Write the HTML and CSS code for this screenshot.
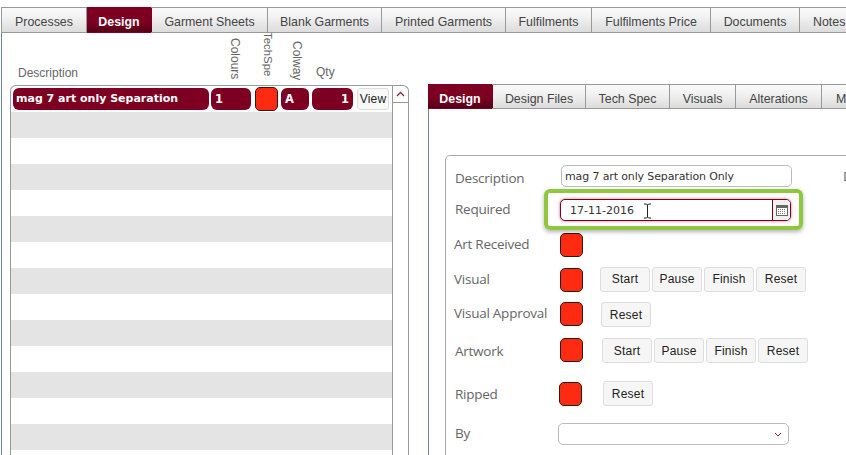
FILE: index.html
```html
<!DOCTYPE html>
<html lang="en">
<head>
<meta charset="utf-8">
<title>Design</title>
<link rel="stylesheet" href="styles.css">
</head>
<body>
<nav class="tabs main-tabs">
  <div class="tab w-processes">Processes</div>
  <div class="tab active w-design">Design</div>
  <div class="tab w-sheets">Garment Sheets</div>
  <div class="tab w-blank">Blank Garments</div>
  <div class="tab w-printed">Printed Garments</div>
  <div class="tab w-fulfil">Fulfilments</div>
  <div class="tab w-price">Fulfilments Price</div>
  <div class="tab w-docs">Documents</div>
  <div class="tab w-notes">Notes</div>
</nav>
<main class="content">
  <section class="left">
    <div class="list-head">
      <span class="h-desc">Description</span>
      <span class="v h-colours">Colours</span>
      <span class="v h-tech">TechSpe</span>
      <span class="v h-colway">Colway</span>
      <span class="h-qty">Qty</span>
    </div>
    <div class="list">
      <div class="rows">
        <div class="row first">
          <div class="pill p-desc">mag 7 art only Separation</div>
          <div class="pill p-col">1</div>
          <div class="swatch s-row"></div>
          <div class="pill p-a">A</div>
          <div class="pill p-qty">1</div>
          <div class="btn b-view">View</div>
        </div>
        <div class="row grey"></div><div class="row"></div>
        <div class="row grey"></div><div class="row"></div>
        <div class="row grey"></div><div class="row"></div>
        <div class="row grey"></div><div class="row"></div>
        <div class="row grey"></div><div class="row"></div>
        <div class="row grey"></div><div class="row"></div>
        <div class="row grey"></div><div class="row"></div>
      </div>
      <div class="scroll">
        <div class="scroll-up">
          <svg width="9" height="6" viewBox="0 0 9 6"><path d="M1 5 L4.5 1.5 L8 5" fill="none" stroke="#8a2a40" stroke-width="1.3"/></svg>
        </div>
      </div>
    </div>
  </section>
  <section class="right">
    <nav class="tabs sub-tabs">
      <div class="tab active w-s-design">Design</div>
      <div class="tab w-s-files">Design Files</div>
      <div class="tab w-s-tech">Tech Spec</div>
      <div class="tab w-s-visuals">Visuals</div>
      <div class="tab w-s-alt">Alterations</div>
      <div class="tab w-s-more">More</div>
    </nav>
    <div class="pane">
      <div class="box">
        <div class="frow r-desc">
          <label class="lbl l-desc">Description</label>
          <div class="input">mag 7 art only Separation Only</div>
          <label class="lbl l-extra">Date</label>
        </div>
        <div class="frow r-req">
          <label class="lbl l-req">Required</label>
          <div class="date-wrap">
            <div class="date">
              <span class="date-val">17-11-2016</span>
              <span class="date-btn">
                <svg width="12" height="11" viewBox="0 0 12 11"><rect x="0.5" y="0.5" width="11" height="10" fill="#fff" stroke="#666"/><rect x="1" y="1" width="10" height="2" fill="#666"/><path d="M2 4.500h8M2 6.500h8M2 8.500h8" stroke="#777" stroke-dasharray="1 1"/></svg>
              </span>
            </div>
            <div class="highlight"></div>
            <svg class="ibeam" width="9" height="16" viewBox="0 0 9 16"><path d="M1 1h2.500l1 1 1-1H8M4.500 2v12M1 15h2.500l1-1 1 1H8" fill="none" stroke="#222" stroke-width="1"/></svg>
          </div>
        </div>
        <div class="frow r-art">
          <label class="lbl l-art l-received">Art Received</label>
          <div class="swatch"></div>
        </div>
        <div class="frow r-visual">
          <label class="lbl l-art">Visual</label>
          <div class="swatch s-low"></div>
          <div class="btns g-17">
            <div class="btn">Start</div><div class="btn">Pause</div><div class="btn">Finish</div><div class="btn">Reset</div>
          </div>
        </div>
        <div class="frow r-approval">
          <label class="lbl l-art l-approval">Visual Approval</label>
          <div class="swatch s-top"></div>
          <div class="btns g-18"><div class="btn">Reset</div></div>
        </div>
        <div class="frow r-artwork">
          <label class="lbl l-work">Artwork</label>
          <div class="swatch s-top"></div>
          <div class="btns g-19">
            <div class="btn">Start</div><div class="btn">Pause</div><div class="btn">Finish</div><div class="btn">Reset</div>
          </div>
        </div>
        <div class="frow r-ripped">
          <label class="lbl l-ripped">Ripped</label>
          <div class="swatch s-bottom"></div>
          <div class="btns g-21"><div class="btn">Reset</div></div>
        </div>
        <div class="frow r-by">
          <label class="lbl l-by">By</label>
          <div class="select">
            <svg width="8" height="5" viewBox="0 0 8 5"><path d="M1 1 L4 4 L7 1" fill="none" stroke="#8a2a40" stroke-width="1"/></svg>
          </div>
        </div>
      </div>
    </div>
  </section>
</main>
</body>
</html>
```

FILE: styles.css
```css
* { box-sizing: border-box; }
html, body { margin: 0; height: 455px; overflow: hidden; background: #fff; }
body { width: 846px; padding-top: 7px; font-family: "Liberation Sans", Arial, sans-serif; color: #555; }

.tabs { display: flex; flex-wrap: nowrap; }
.main-tabs { height: 26px; margin-left: 1px; width: 845px; overflow: hidden; }
.sub-tabs { height: 25px; width: 418px; overflow: hidden; }
.tab {
  flex: none; display: flex; align-items: center; justify-content: center;
  font-size: 12.4px; color: #444; white-space: nowrap; padding-top: 4px;
  border-top: 1px solid #999; border-bottom: 1px solid #999; border-right: 1px solid #999;
  background: linear-gradient(#fafafa, #f1f1f1 40%, #dcdcdc);
}
.tab.active {
  color: #fff; font-weight: bold; border-right-color: transparent;
  background: linear-gradient(#7d0022, #7d0022 55%, #560017);
  border-top-color: #7d0022; border-bottom-color: #7d0022;
}
.w-processes { width: 86px; border-left: 1px solid #999; }
.w-design { width: 65px; }
.w-sheets { width: 116px; }
.w-blank { width: 114px; }
.w-printed { width: 124px; }
.w-fulfil { width: 86px; }
.w-price { width: 119px; }
.w-docs { width: 89px; }
.w-notes { width: 60px; justify-content: flex-start; padding-left: 13px; }
.w-s-design { width: 65px; }
.w-s-files { width: 93px; }
.w-s-tech { width: 84px; }
.w-s-visuals { width: 66px; }
.w-s-alt { width: 86px; }
.w-s-more { width: 40px; justify-content: flex-start; padding-left: 14px; }

.content { display: flex; height: 423px; margin-left: 1px; }

.left { flex: none; width: 427px; border-left: 1px solid #6b8793; }
.list-head {
  height: 52px; padding-left: 16px; display: grid;
  grid-template-columns: 211px 33px 29px 25px auto; grid-template-rows: 52px;
  align-items: end; justify-items: start;
  font-size: 12px; color: #666; overflow: hidden;
}
.v { writing-mode: vertical-rl; line-height: 12px; }
.h-desc { padding-bottom: 5px; }
.h-colours { padding-bottom: 6px; }
.h-tech { padding-bottom: 9px; font-size: 11.4px; }
.h-colway { padding-bottom: 5px; }
.h-qty { padding-bottom: 6px; }

.list {
  margin-left: 8px; width: 399px; height: 371px; display: flex;
  border: 1px solid #999; border-bottom: 0; border-radius: 6px 6px 0 0; overflow: hidden;
}
.rows { flex: none; width: 382px; border-right: 1px solid #999; }
.row { height: 26px; }
.row.grey { background: #e4e4e4; }
.row.first { display: flex; align-items: flex-start; padding: 2px 0 0 2px; }
.pill {
  height: 22px; border-radius: 6px; background: #7d0022; color: #fff;
  font: bold 11.5px/22px "DejaVu Sans", Verdana, sans-serif; padding: 0 4px;
  white-space: nowrap; overflow: hidden;
}
.p-desc { width: 196px; font-size: 11px; padding-left: 3px; }
.p-col { width: 40px; margin-left: 2px; }
.p-a { width: 28px; margin-left: 3px; }
.p-qty { width: 41px; margin-left: 3px; text-align: right; }
.scroll { flex: 1; }
.scroll-up { height: 17px; border-bottom: 1px solid #999; display: flex; align-items: center; justify-content: center; }

.swatch {
  flex: none; width: 23px; height: 24px; background: #ff2a12;
  border: 1px solid #2d1a14; border-radius: 5px;
}
.s-row { margin: -1px 0 0 4px; }
.s-low { margin-top: 2px; }
.s-top { align-self: flex-start; }
.s-bottom { align-self: flex-end; }

.btn {
  flex: none; width: 50px; height: 25px; display: flex; align-items: center; justify-content: center;
  font-size: 12px; letter-spacing: 0.2px; color: #222; background: #f6f6f6; border: 1px solid #ddd; border-radius: 3px;
}
.b-view { width: 32px; height: 22px; margin-left: 4px; background: #f8f8f8; }

.right { flex: none; width: 418px; padding-top: 51px; }
.pane { border-left: 1px solid #6b8793; height: 400px; padding: 46px 0 0 16px; }
.box { width: 500px; height: 400px; border: 1px solid #aaa; border-radius: 5px 0 0 0; padding-left: 9px; }

.frow { display: flex; align-items: center; }
.lbl { flex: none; font: 13.5px "Open Sans", sans-serif; color: #666; letter-spacing: -0.25px; }
.l-desc { width: 106px; margin-top: 3px; }
.l-req { width: 105px; margin-top: -3px; }
.l-art { width: 106px; margin-left: -1px; }
.l-received { margin-top: -2px; }
.l-approval { margin-top: -4px; }
.l-work { width: 105px; margin-top: 0; }
.l-ripped { width: 104px; }
.l-by { width: 103px; margin-top: -2px; }
.l-extra { margin-left: 51px; }

.r-desc { margin-top: 9px; height: 22px; }
.r-req { margin-top: 12px; height: 22px; }
.r-art { margin-top: 12px; height: 24px; }
.r-visual { margin-top: 9px; height: 26px; }
.r-approval { margin-top: 10px; height: 25px; }
.r-artwork { margin-top: 11px; height: 25px; }
.r-ripped { margin-top: 18px; height: 25px; }
.r-by { margin-top: 17px; height: 22px; }

.input, .select {
  flex: none; width: 231px; height: 22px; border: 1px solid #bbb; border-radius: 5px;
  font: 11px/21px "DejaVu Sans", Verdana, sans-serif; letter-spacing: -0.13px; color: #333; padding-left: 3px; background: #fff;
}
.select { display: flex; align-items: center; justify-content: flex-end; padding-right: 6px; }

.date-wrap { position: relative; flex: none; width: 231px; height: 22px; }
.date {
  height: 22px; display: flex; justify-content: space-between; background: #fff;
  border: 1px solid #7d0022; border-radius: 5px; box-shadow: 0 0 3px rgba(125,0,34,.6);
  font: 11px/22px "DejaVu Sans", Verdana, sans-serif; color: #333; overflow: hidden;
}
.date-val { padding-left: 9px; }
.date-btn { width: 18px; border-left: 1px solid #7d0022; background: #f1f1f1; display: flex; align-items: center; justify-content: center; }
.highlight {
  position: absolute; top: -10px; left: -16px; right: -12px; bottom: -9px;
  border: 4px solid #8fc740; border-radius: 6px; box-shadow: 0 2px 4px rgba(0,0,0,.3);
}
.ibeam { position: absolute; left: 83px; top: 4px; }

.btns { display: flex; gap: 2px; }
.g-17 { margin-left: 17px; }
.g-18 { margin-left: 18px; }
.g-19 { margin-left: 19px; }
.g-21 { margin-left: 21px; }
```
